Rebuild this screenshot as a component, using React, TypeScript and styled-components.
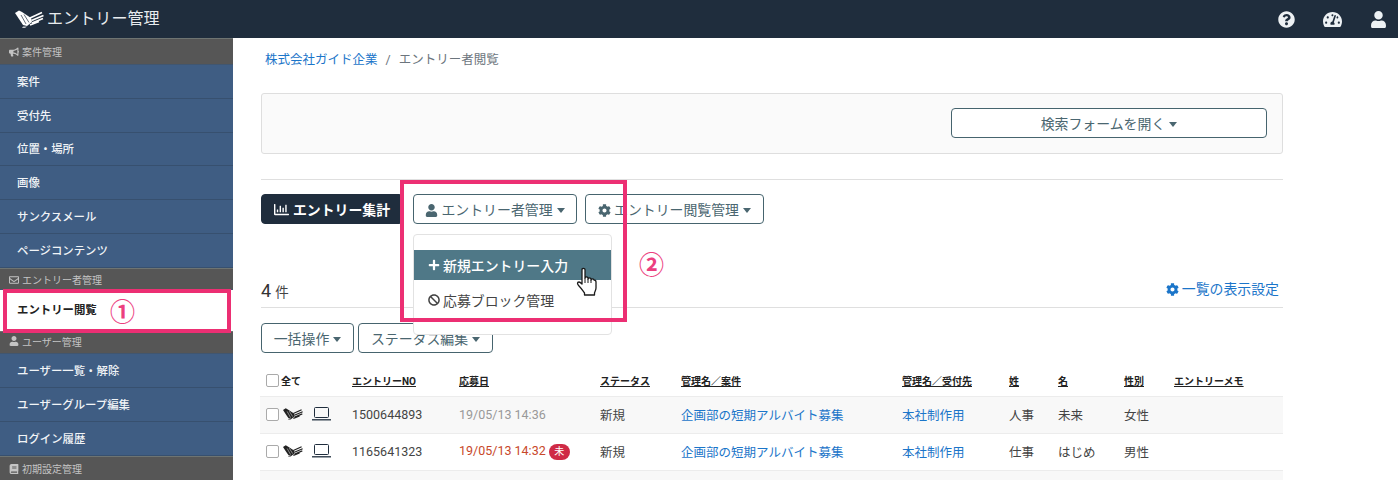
import React from "react";
import styled, { createGlobalStyle } from "styled-components";
import {
  FaBan,
  FaBook,
  FaBullhorn,
  FaCog,
  FaPlus,
  FaQuestionCircle,
  FaRegChartBar,
  FaRegEnvelope,
  FaTachometerAlt,
  FaUser,
} from "react-icons/fa";

const GlobalStyle = createGlobalStyle`
  html, body {
    margin: 0;
    padding: 0;
    height: 480px;
    overflow: hidden;
    background: #fff;
    font-family: Roboto, "Noto Sans CJK JP", sans-serif;
    color: #333;
  }
  * { box-sizing: border-box; }
`;

const Logo = ({ size = 29, color = "#fff" }: { size?: number; color?: string }) => (
  <svg width={size} height={size * 0.62} viewBox="0 0 29 18" fill="none">
    <path d="M0 3 L4 0.5 L7 2 L16 8 L17 12 L12 16 L8 15 L4 9 Z" fill={color} />
    <path d="M8 16.5 H12 L10 18 H7 Z" fill={color} opacity="0.7" />
    <path d="M15 8 L27 2.5 M16.5 10.5 L28.5 5.5 M17 13 L28 8.5 M15 15 L24 11.5" stroke={color} strokeWidth="1.8" />
    <path d="M6 5 L11 14 M9 4.5 L14 12.5" stroke={color === "#fff" ? "#1f2d3d" : "#f8f8f8"} strokeWidth="0.7" />
  </svg>
);

const Laptop = () => (
  <svg width="19" height="14" viewBox="0 0 19 14" fill="none" stroke="#1f2d3d">
    <rect x="2.5" y="0.5" width="14" height="10" rx="1" />
    <path d="M0 12.8 H19" strokeWidth="1.3" />
  </svg>
);

const Hand = () => (
  <svg width="22" height="29" viewBox="0 0 22 29">
    <path
      d="M6 2.5 C6 1 9 1 9 2.5 V11 C9 9.5 12 9.5 12 11 V12 C12 10.5 15 10.5 15 12 V13 C15 11.5 18 11.5 18 13 C18 13 20 13 20 15 V21 C20 23 19 24 18.5 26 V28 H8.5 V26 C7 24 5 21 3 19 C1 17 1 15 3 15 C4 15 5 16 6 17 Z"
      fill="#fff"
      stroke="#1a1a1a"
      strokeWidth="1.3"
      strokeLinejoin="round"
    />
    <path d="M9 11 V16 M12 12 V16 M15 13 V16" stroke="#1a1a1a" strokeWidth="1" />
  </svg>
);

const Caret = styled.span`
  display: inline-block;
  width: 0;
  height: 0;
  margin-left: 4px;
  vertical-align: 2px;
  border-top: 5px solid currentColor;
  border-left: 4.5px solid transparent;
  border-right: 4.5px solid transparent;
`;

const TopBar = styled.header`
  height: 38px;
  background: #1f2d3d;
  display: flex;
  align-items: center;
  justify-content: space-between;
  padding: 0 11px 0 15px;
`;

const Brand = styled.div`
  display: flex;
  align-items: center;
  gap: 3px;
  color: #e8ecef;
  font-size: 16px;
  line-height: 1;
  letter-spacing: 0.1px;
`;

const TopIcons = styled.div`
  display: flex;
  align-items: center;
  gap: 28px;
  color: #edf1f4;
  line-height: 1;

  svg { display: block; }
`;

const Body = styled.div`
  display: flex;
  height: 442px;
  overflow: hidden;
`;

const Side = styled.nav`
  width: 233px;
  flex: none;
  background: #3f5d83;
  position: relative;
`;

const SectionHead = styled.div<{ $h: number; $nudge?: number }>`
  height: ${({ $h }) => $h}px;
  padding: ${({ $nudge }) =>
    $nudge ? `${$nudge > 0 ? $nudge : 0}px 0 ${$nudge < 0 ? -$nudge : 0}px 9px` : "0 0 0 9px"};
  background: #565656;
  border-top: 1px solid #6e7472;
  border-bottom: 1px solid #41566f;
  color: #c4c4c4;
  font-size: 10px;
  display: flex;
  align-items: center;
  gap: 3px;

  svg { font-size: 10px; }
`;

const SideItem = styled.div<{ $active?: boolean }>`
  height: 33.8px;
  display: flex;
  align-items: center;
  padding: 0 0 1px 17px;
  font-size: 11.4px;
  color: ${({ $active }) => ($active ? "#222" : "#f1f4f7")};
  font-weight: ${({ $active }) => ($active ? 700 : 500)};
  background: ${({ $active }) => ($active ? "#fff" : "transparent")};
  border-bottom: 1px solid ${({ $active }) => ($active ? "#fff" : "#37506f")};
`;

const ActiveItem = styled(SideItem)`
  height: 41px;
`;

const Main = styled.main`
  flex: 1;
  padding: 13px 115px 0 28px;
  min-width: 0;
  position: relative;
`;

const Crumbs = styled.div`
  height: 17px;
  margin-left: 4px;
  font-size: 12.5px;
  line-height: 17px;
  color: #6c757d;
  display: flex;
  gap: 8px;
`;

const Link = styled.a`
  color: #1b75c9;
  text-decoration: none;
`;

const SearchCard = styled.section`
  margin-top: 25px;
  height: 61px;
  padding: 0 15px 1px 0;
  background: #fafafa;
  border: 1px solid #dedede;
  border-radius: 3px;
  display: flex;
  align-items: center;
  justify-content: flex-end;
`;

const Btn = styled.button<{ $w: number; $dark?: boolean }>`
  width: ${({ $w }) => $w}px;
  height: 30px;
  padding: 0;
  font-family: inherit;
  font-size: 13.9px;
  font-weight: ${({ $dark }) => ($dark ? 700 : 400)};
  background: ${({ $dark }) => ($dark ? "#1f2d3d" : "#fff")};
  color: ${({ $dark }) => ($dark ? "#fff" : "#4a6670")};
  border: 1px solid ${({ $dark }) => ($dark ? "#1f2d3d" : "#46646e")};
  border-radius: 4px;
  white-space: nowrap;

  svg { font-size: 13px; vertical-align: -1.5px; margin-right: 3px; }
`;

const SummaryBtn = styled(Btn)`
  margin-right: 2px;

  svg { font-size: 15px; vertical-align: -2px; margin-right: 4px; }
`;

const Rule = styled.hr`
  margin: 25px 0 14px;
  border: 0;
  border-top: 1px solid #dfdfdf;
`;

const ActionRow = styled.div`
  display: flex;
  gap: 8px;
  position: relative;
`;

const Menu = styled.div`
  position: absolute;
  top: 40px;
  left: 152px;
  width: 199px;
  height: 101px;
  padding-top: 15px;
  background: #fff;
  border: 1px solid #e2e2e2;
  border-radius: 4px;
  z-index: 2;
`;

const MenuItem = styled.div<{ $hot?: boolean }>`
  height: 30px;
  margin-top: ${({ $hot }) => ($hot ? 0 : "5px")};
  padding: 0 0 1px 14px;
  display: flex;
  align-items: center;
  gap: 3px;
  font-size: 13.9px;
  color: ${({ $hot }) => ($hot ? "#fff" : "#444")};
  font-weight: ${({ $hot }) => ($hot ? 500 : 400)};
  background: ${({ $hot }) => ($hot ? "#4f7887" : "transparent")};

  svg { font-size: 12px; }
`;

const CountRow = styled.div`
  margin-top: 56px;
  height: 28px;
  padding-right: 4px;
  border-bottom: 1px solid #dfdfdf;
  display: flex;
  align-items: flex-start;
  justify-content: space-between;
`;

const Count = styled.div`
  font-size: 13.5px;
  line-height: 22px;
  color: #444;

  b { font-size: 18px; font-weight: 400; margin-right: 4px; color: #333; }
`;

const Settings = styled(Link)`
  font-size: 13.9px;
  line-height: 18px;
  display: flex;
  align-items: center;
  gap: 3px;

  svg { font-size: 13px; }
`;

const BulkRow = styled.div`
  margin-top: 15px;
  display: flex;
  gap: 4px;
`;

const Table = styled.table`
  margin: 15px 0 0 -1px;
  width: 1023px;
  border-collapse: collapse;
  table-layout: fixed;
  font-size: 12.5px;
`;

const Th = styled.th<{ $w: number }>`
  width: ${({ $w }) => $w}px;
  height: 28px;
  padding: 0 0 3px 0;
  text-align: left;
  font-size: 10px;
  font-weight: 700;
  color: #222;
  text-decoration: underline;
  vertical-align: middle;
`;

const ThPlain = styled(Th)`
  text-decoration: none;
`;

const Tr = styled.tr<{ $odd: boolean }>`
  height: 37px;
  background: ${({ $odd }) => ($odd ? "#f8f8f8" : "#fff")};
  border-top: 1px solid #ececec;
`;

const Td = styled.td<{ $tone?: "muted" | "hot" }>`
  padding: 0 0 1px;
  color: ${({ $tone }) =>
    $tone === "muted" ? "#999" : $tone === "hot" ? "#c8482a" : "#444"};
  white-space: nowrap;
`;

const CheckCell = styled.div`
  display: flex;
  align-items: center;
  padding-left: 6px;
`;

const Box = styled.span`
  width: 13px;
  height: 13px;
  margin-right: 4px;
  border: 1px solid #aaa;
  border-radius: 2px;
  background: #fff;
  flex: none;
`;

const AllLabel = styled.span`
  margin-left: -2px;
`;

const RowIcons = styled.span`
  display: flex;
  align-items: center;
  gap: 9px;
`;

const Unread = styled.span`
  display: inline-block;
  width: 21px;
  height: 16px;
  margin-left: 3px;
  border-radius: 8px;
  background: #cf2a45;
  color: #fff;
  font-size: 10px;
  line-height: 16px;
  text-align: center;
`;

const Frame = styled.div<{ $l: number; $t: number; $w: number; $h: number }>`
  position: absolute;
  left: ${({ $l }) => $l}px;
  top: ${({ $t }) => $t}px;
  width: ${({ $w }) => $w}px;
  height: ${({ $h }) => $h}px;
  border: 4px solid #ec2f73;
  z-index: 3;
  pointer-events: none;
`;

const Mark = styled.span<{ $l: number; $t: number }>`
  position: absolute;
  left: ${({ $l }) => $l}px;
  top: ${({ $t }) => $t}px;
  font-size: 25px;
  line-height: 1;
  color: #ec3f7f;
  font-weight: 700;
  z-index: 3;
`;

const Pointer = styled.span`
  position: absolute;
  left: 576px;
  top: 267px;
  z-index: 4;
  line-height: 0;
`;

const Page = styled.div`
  width: 1398px;
  height: 480px;
  position: relative;
  overflow: hidden;
`;

const caseItems = ["案件", "受付先", "位置・場所", "画像", "サンクスメール", "ページコンテンツ"];

const rows = [
  { no: "1500644893", date: "19/05/13 14:36", tone: "muted" as const, unread: false, sei: "人事", mei: "未来", sex: "女性" },
  { no: "1165641323", date: "19/05/13 14:32", tone: "hot" as const, unread: true, sei: "仕事", mei: "はじめ", sex: "男性" },
];

export default function App() {
  return (
    <Page>
      <GlobalStyle />
      <TopBar>
        <Brand>
          <Logo />
          エントリー管理
        </Brand>
        <TopIcons>
          <FaQuestionCircle size={17} />
          <FaTachometerAlt size={19} />
          <FaUser size={17} />
        </TopIcons>
      </TopBar>
      <Body>
        <Side>
          <SectionHead $h={27}>
            <FaBullhorn />
            案件管理
          </SectionHead>
          {caseItems.map((i) => (
            <SideItem key={i}>{i}</SideItem>
          ))}
          <SectionHead $h={22} $nudge={2}>
            <FaRegEnvelope />
            エントリー者管理
          </SectionHead>
          <ActiveItem $active>エントリー閲覧</ActiveItem>
          <SectionHead $h={23.5} $nudge={-3}>
            <FaUser />
            ユーザー管理
          </SectionHead>
          <SideItem>ユーザー一覧・解除</SideItem>
          <SideItem>ユーザーグループ編集</SideItem>
          <SideItem>ログイン履歴</SideItem>
          <SectionHead $h={26}>
            <FaBook />
            初期設定管理
          </SectionHead>
        </Side>
        <Main>
          <Crumbs>
            <Link>株式会社ガイド企業</Link>
            <span>/</span>
            <span>エントリー者閲覧</span>
          </Crumbs>
          <SearchCard>
            <Btn $w={316}>
              検索フォームを開く
              <Caret />
            </Btn>
          </SearchCard>
          <Rule />
          <ActionRow>
            <SummaryBtn $w={142} $dark>
              <FaRegChartBar />
              エントリー集計
            </SummaryBtn>
            <Btn $w={164}>
              <FaUser />
              エントリー者管理
              <Caret />
            </Btn>
            <Btn $w={179}>
              <FaCog />
              エントリー閲覧管理
              <Caret />
            </Btn>
            <Menu>
              <MenuItem $hot>
                <FaPlus />
                新規エントリー入力
              </MenuItem>
              <MenuItem>
                <FaBan />
                応募ブロック管理
              </MenuItem>
            </Menu>
          </ActionRow>
          <CountRow>
            <Count>
              <b>4</b>件
            </Count>
            <Settings>
              <FaCog />
              一覧の表示設定
            </Settings>
          </CountRow>
          <BulkRow>
            <Btn $w={93}>
              一括操作
              <Caret />
            </Btn>
            <Btn $w={135}>
              ステータス編集
              <Caret />
            </Btn>
          </BulkRow>
          <Table>
            <thead>
              <tr>
                <ThPlain $w={92}>
                  <CheckCell>
                    <Box />
                    <AllLabel>全て</AllLabel>
                  </CheckCell>
                </ThPlain>
                <Th $w={107}>エントリーNO</Th>
                <Th $w={141}>応募日</Th>
                <Th $w={81}>ステータス</Th>
                <Th $w={221}>管理名／案件</Th>
                <Th $w={107}>管理名／受付先</Th>
                <Th $w={49}>姓</Th>
                <Th $w={66}>名</Th>
                <Th $w={50}>性別</Th>
                <Th $w={109}>エントリーメモ</Th>
              </tr>
            </thead>
            <tbody>
              {rows.map((r, i) => (
                <Tr key={r.no} $odd={i % 2 === 0}>
                  <Td>
                    <CheckCell>
                      <Box />
                      <RowIcons>
                        <Logo size={20} color="#222" />
                        <Laptop />
                      </RowIcons>
                    </CheckCell>
                  </Td>
                  <Td>{r.no}</Td>
                  <Td $tone={r.tone}>
                    {r.date}
                    {r.unread && <Unread>未</Unread>}
                  </Td>
                  <Td>新規</Td>
                  <Td>
                    <Link>企画部の短期アルバイト募集</Link>
                  </Td>
                  <Td>
                    <Link>本社制作用</Link>
                  </Td>
                  <Td>{r.sei}</Td>
                  <Td>{r.mei}</Td>
                  <Td>{r.sex}</Td>
                  <Td />
                </Tr>
              ))}
              <Tr $odd={true}>
                <Td colSpan={10} />
              </Tr>
            </tbody>
          </Table>
        </Main>
      </Body>
      <Frame $l={3} $t={289} $w={228} $h={44} />
      <Mark $l={110} $t={300}>①</Mark>
      <Frame $l={400} $t={180} $w={227} $h={142} />
      <Mark $l={639} $t={253}>②</Mark>
      <Pointer>
        <Hand />
      </Pointer>
    </Page>
  );
}
